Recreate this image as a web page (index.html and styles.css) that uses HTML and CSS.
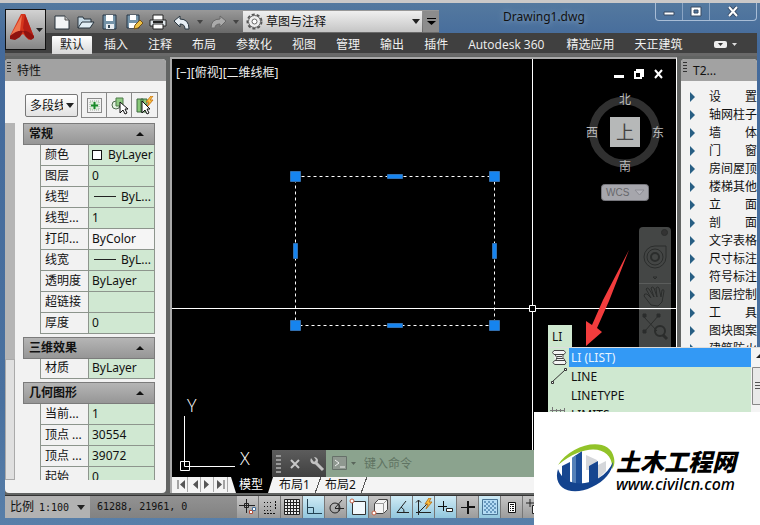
FILE: index.html
```html
<!DOCTYPE html>
<html lang="zh-CN">
<head>
<meta charset="utf-8">
<title>Drawing1.dwg</title>
<link rel="stylesheet" href="styles.css">
</head>
<body>
<div class="window">
  <header class="header">
    <button class="app-button" aria-label="应用程序菜单">
      <svg width="38" height="38" viewBox="0 0 38 38">
        <path d="M15 3h4l9 23-5 3-6-6-7 5-6-3z" fill="#d5351c"/>
        <path d="M16 4l-2 16-10 6z" fill="#ef7650"/>
        <path d="M19 3l9 23-6 2-5-11z" fill="#b51e15"/>
        <path d="M4 25q7-6 13-5l-3 6-5 3-5-1zM28 25q-7-6-11-5l3 6 5 3 3-2z" fill="#8f130f"/>
        <path d="M30 17h7l-3.500 4z" fill="#222"/>
      </svg>
    </button>
    <div class="title-row">
      <div class="quick-bar">
        <button class="tool" aria-label="新建"><svg width="18" height="16" viewBox="0 0 18 16"><path d="M2 2h10l4 4v9H2z" fill="#f2f5f7" stroke="#26333d"/><path d="M12 2v4h4" fill="#bbb" stroke="#555"/></svg></button>
        <button class="tool" aria-label="打开"><svg width="18" height="16" viewBox="0 0 18 16"><path d="M1 14V3h5l1 2h7v3" fill="#c8dbe7" stroke="#26333d"/><path d="M1 14l4-6h12l-4 6z" fill="#e1edf4" stroke="#26333d"/></svg></button>
        <button class="tool" aria-label="保存"><svg width="18" height="16" viewBox="0 0 18 16"><path d="M2 1h13v14H2z" fill="#7493a8" stroke="#263746"/><path d="M5 1h7v6H5z" fill="#fff"/><path d="M5 10h8v5H5z" fill="#e8edf1"/><path d="M7 11h2v3H7z" fill="#33495a"/></svg></button>
        <button class="tool" aria-label="另存为"><svg width="18" height="16" viewBox="0 0 18 16"><path d="M2 1h12v13H2z" fill="#7493a8" stroke="#263746"/><path d="M5 1h6v5H5zM4 9h8v5H4z" fill="#fff"/><path d="M9 15l1-4 5-5 3 3-5 5z" fill="#eec246" stroke="#765118"/></svg></button>
        <button class="tool" aria-label="打印"><svg width="18" height="16" viewBox="0 0 18 16"><path d="M4 1h10v6H4z" fill="#fff" stroke="#222"/><path d="M1 6h16v6H1z" fill="#dfe5e9" stroke="#222"/><path d="M4 10h10v5H4z" fill="#fff" stroke="#222"/><path d="M4 8h10" stroke="#222" stroke-width="2"/></svg></button>
        <button class="tool" aria-label="放弃"><svg width="18" height="16" viewBox="0 0 18 16"><path d="M1 7l6-5v3q9 0 9 10h-4q0-5-5-5v3z" fill="#e8eff5" stroke="#293640"/></svg></button>
        <span class="caret dim"></span>
        <button class="tool" aria-label="重做"><svg width="18" height="16" viewBox="0 0 18 16"><path d="M17 7l-6-5v3q-9 0-9 9h4q0-4 5-4v3z" fill="#aaa" stroke="#686868"/></svg></button>
        <span class="caret dim"></span>
        <label class="workspace">
          <svg width="17" height="17" viewBox="0 0 17 17"><circle cx="8.500" cy="8.500" r="7" fill="none" stroke="#555" stroke-width="2" stroke-dasharray="3 2"/><circle cx="8.500" cy="8.500" r="6" fill="#eee" stroke="#666"/><circle cx="8.500" cy="8.500" r="2.500" fill="#fff" stroke="#666"/></svg>
          <select aria-label="工作空间"><option>草图与注释</option></select>
          <span class="caret"></span>
        </label>
        <button class="more" aria-label="自定义"><svg width="9" height="9" viewBox="0 0 9 9"><path d="M0 1.500h9" stroke="#000"/><path d="M0 4h9L4.500 8z" fill="#000"/></svg></button>
      </div>
      <h1 class="title">Drawing1.dwg</h1>
      <div class="window-controls">
        <button aria-label="最小化"><svg width="14" height="13" viewBox="0 0 14 13"><path d="M2 7h10v3H2z" fill="#fff" stroke="#394b63"/></svg></button>
        <button aria-label="最大化"><svg width="14" height="13" viewBox="0 0 14 13"><path d="M2 2h10v9H2zM5 5h4v3H5z" fill="#fff" fill-rule="evenodd" stroke="#394b63"/></svg></button>
        <button class="close" aria-label="关闭"><svg width="14" height="13" viewBox="0 0 14 13"><path d="M3 2l8 9M11 2l-8 9" stroke="#394b63" stroke-width="4"/><path d="M3 2l8 9M11 2l-8 9" stroke="#fff" stroke-width="2"/></svg></button>
      </div>
    </div>
    <nav class="ribbon">
      <a class="active" href="#">默认</a><a href="#">插入</a><a href="#">注释</a><a href="#">布局</a><a href="#">参数化</a><a href="#">视图</a><a href="#">管理</a><a href="#">输出</a><a href="#">插件</a><a class="latin" href="#">Autodesk 360</a><a href="#">精选应用</a><a href="#">天正建筑</a>
      <button class="ribbon-toggle" aria-label="最小化功能区"><svg width="24" height="9" viewBox="0 0 24 9"><rect width="13" height="7" y="1" rx="2" fill="#eee"/><path d="M4 3h5L6.500 6z" fill="#333"/><path d="M18 3h5l-2.500 3z" fill="#ddd"/></svg></button>
    </nav>
  </header>

  <main class="workarea">
    <section class="palette properties">
      <h2 class="palette-title"><span class="grip"></span>特性</h2>
      <div class="properties-tools">
        <div class="object-pick"><select aria-label="对象类型"><option>多段线</option></select><span class="caret"></span></div>
        <div class="tool-group">
          <button aria-label="切换 PICKADD"><svg width="19" height="19" viewBox="0 0 19 19"><path d="M2.500 2.500h14v14h-14z" fill="none" stroke="#222" stroke-dasharray="1 1"/><path d="M5 5h9v9H5z" fill="#dcedda" stroke="#9aaa9a" stroke-dasharray="1 1"/><path d="M6 9.500h7M9.500 6v7" stroke="#168927" stroke-width="2"/></svg></button>
          <button aria-label="选择对象"><svg width="19" height="19" viewBox="0 0 19 19"><circle cx="6" cy="9" r="4" fill="#e4f2e2" stroke="#4d6a4d"/><path d="M6 2h7v8H6z" fill="#8fcb83" stroke="#4e7b4a"/><path d="M10 6v11l3-3 2 4 2-1-2-4h3z" fill="#fff" stroke="#111"/></svg></button>
          <button aria-label="快速选择"><svg width="19" height="19" viewBox="0 0 19 19"><path d="M2 3h6v13H2zM6 3h6v13H6z" fill="#89c979" stroke="#3f6940"/><path d="M16 0l-5 6h3l-2 5 6-7h-3l3-4z" fill="#ffc83d" stroke="#cc7c20"/><path d="M7 5v12l3-3 2 4 2-1-2-4h3z" fill="#fff" stroke="#111"/></svg></button>
        </div>
      </div>
      <div class="properties-body">
        <div class="scrollbar"><span></span></div>
        <div class="groups">
          <section>
            <h3>常规<span class="up"></span></h3>
            <table>
              <tr><th scope="row">颜色</th><td><span class="swatch"></span>ByLayer</td></tr>
              <tr><th scope="row">图层</th><td>0</td></tr>
              <tr><th scope="row">线型</th><td><span class="line-sample"></span>ByL...</td></tr>
              <tr><th scope="row">线型...</th><td>1</td></tr>
              <tr><th scope="row">打印...</th><td class="plain">ByColor</td></tr>
              <tr><th scope="row">线宽</th><td><span class="line-sample"></span>ByL...</td></tr>
              <tr><th scope="row">透明度</th><td>ByLayer</td></tr>
              <tr><th scope="row">超链接</th><td></td></tr>
              <tr><th scope="row">厚度</th><td>0</td></tr>
            </table>
          </section>
          <section>
            <h3>三维效果<span class="up"></span></h3>
            <table>
              <tr><th scope="row">材质</th><td>ByLayer</td></tr>
            </table>
          </section>
          <section>
            <h3>几何图形<span class="up"></span></h3>
            <table>
              <tr><th scope="row">当前...</th><td>1</td></tr>
              <tr><th scope="row">顶点 ...</th><td>30554</td></tr>
              <tr><th scope="row">顶点 ...</th><td>39072</td></tr>
              <tr><th scope="row">起始</th><td>0</td></tr>
            </table>
          </section>
        </div>
      </div>
    </section>

    <section class="drawing">
      <div class="canvas">
        <svg class="model" width="504" height="418" viewBox="172 59 504 418">
          <text class="view-label" x="176" y="77">[−][俯视][二维线框]</text>
          <g stroke="#fff" fill="none">
            <path d="M614 76.500h10" stroke-width="3"/>
            <path d="M635 72h6v6h-6zM637 72v-2h6v6h-2" stroke-width="2"/>
            <path d="M655 70l7 8M662 70l-7 8" stroke-width="2"/>
          </g>
          <circle cx="624.500" cy="132" r="31.500" fill="none" stroke="#303030" stroke-width="8"/>
          <rect x="610" y="117" width="30" height="30" fill="#b6b8b8"/>
          <g class="compass">
            <text x="625" y="104">北</text><text x="625" y="171">南</text>
            <text x="592" y="137">西</text><text x="658" y="137">东</text>
            <text class="top" x="625" y="139">上</text>
          </g>
          <rect x="601.500" y="184.500" width="47" height="16" rx="3" fill="#a6a6ac" stroke="#77777d"/>
          <text class="wcs" x="606" y="196">WCS</text>
          <path d="M635 190h9l-4.500 5z" fill="#b4b4bb" stroke="#8c8c93"/>
          <path d="M639 347V231q0-4 4-4h24q4 0 4 4v116z" fill="#444645"/>
          <g fill="none" stroke="#2b2d2c">
            <path d="M639 283.500h32M639 309.500h32" stroke="#5b5d5c"/>
            <circle cx="664.500" cy="232.500" r="3" fill="#333"/>
            <path d="M655 246h11v11a11 11 0 1 1-11-11z"/><circle cx="655" cy="257" r="8"/><circle cx="655" cy="257" r="4" stroke-width="2"/><path d="M653 277h4l-2 2z"/>
            <path d="M651 305l-7-9q0-3 3-2l4 4-5-9q1-2 3 0l5 8-3-9q1-2 3 0l3 9-1-9q2-2 3 0l2 9 1-7q2-1 2 1l-2 11-4 4z"/>
            <path d="M644 317l13 14M659 315l-14 16" /><path d="M643 314h3v3h-3zM657 314h3v3h-3zM643 330h3v3h-3z" fill="#2b2d2c"/><circle cx="660" cy="331" r="5" stroke-width="2"/><path d="M663 335l4 4" stroke-width="3"/>
          </g>
          <path d="M295.500 176.500h199v149h-199z" fill="none" stroke="#fff" stroke-dasharray="3 3"/>
          <g fill="#1684ef" stroke="#326fae">
            <path d="M290.500 171.500h10v10h-10zM489.500 171.500h10v10h-10zM290.500 320.500h10v10h-10zM489.500 320.500h10v10h-10z"/>
            <path d="M387.500 174.500h15v4h-15zM387.500 323.500h15v4h-15zM293.500 243.500h4v15h-4zM492.500 243.500h4v15h-4z"/>
          </g>
          <path d="M172 308.500h357M536 308.500h140M532.500 59v246M532.500 312v165M529.500 305.500h6v6h-6z" fill="none" stroke="#fff"/>
          <path d="M586 346V321l6 4 11-25 26-50-20 51-12 27 5 4z" fill="#f23c3d"/>
          <path d="M184.500 416v50.500H235M180.500 461.500h9v9h-9z" fill="none" stroke="#fff"/>
          <text class="axis" x="187" y="412">Y</text>
          <text class="axis" x="240" y="465">X</text>
        </svg>
        <div class="command-line">
          <span class="command-grip"></span>
          <button aria-label="关闭"><svg width="12" height="12" viewBox="0 0 12 12"><path d="M2 2l8 8M10 2l-8 8" stroke="#c7c7c7" stroke-width="2"/></svg></button>
          <button aria-label="自定义"><svg width="16" height="16" viewBox="0 0 16 16"><path d="M7 7l7 7" stroke="#c2c2c2" stroke-width="3"/><path d="M2 2q-2 4 2 6 5 1 5-4-1-3-4-3l2 3-2 2z" fill="#c2c2c2"/></svg></button>
          <label class="prompt">
            <svg width="26" height="15" viewBox="0 0 26 15"><path d="M.500.500h14v13H.500z" fill="#8f9890" stroke="#667069"/><path d="M3 4l4 3-4 3M8 11h5" fill="none" stroke="#f0f0f0"/><path d="M19 6h5l-2.500 3z" fill="#59665b"/></svg>
            <input type="text" placeholder="键入命令" aria-label="命令">
          </label>
        </div>
      </div>
      <nav class="layout-tabs">
        <svg width="54" height="15" viewBox="0 0 54 15"><path d="M13.500 0v15M26.500 0v15M39.500 0v15M53.500 0v15" stroke="#aaa"/><path d="M4 3v9M50 3v9" stroke="#555"/><path d="M11 3v9L6 7.500zM24 3v9l-5-4.500zM30 3v9l5-4.500zM43 3v9l5-4.500z" fill="#555"/></svg>
        <a class="active" href="#">模型</a><a href="#">布局1</a><a href="#">布局2</a>
      </nav>
    </section>

    <aside class="palette tangent">
      <h2 class="palette-title"><span class="grip"></span>T2...</h2>
      <ul>
        <li>设　　置</li><li>轴网柱子</li><li>墙　　体</li><li>门　　窗</li><li>房间屋顶</li><li>楼梯其他</li><li>立　　面</li><li>剖　　面</li><li>文字表格</li><li>尺寸标注</li><li>符号标注</li><li>图层控制</li><li>工　　具</li><li>图块图案</li><li>建筑防火</li>
      </ul>
    </aside>

    <div class="suggest">
      <input class="typed" type="text" value="LI" aria-label="动态输入">
      <div class="suggest-box">
        <ul>
          <li class="selected"><svg width="20" height="19" viewBox="0 0 20 19"><path d="M6 5.500h9l2 8.500H7z" fill="#f4f4f4"/><path d="M6 2.500h10q3 2 0 4H6q-3-2 0-4zM7 6.500q3 3 1 6M15 6.500q-1 3 2 6M7 12.500h10q2 2 0 4H7q-4-2 0-4zM9 8.500h5M9 10.500h6" fill="#f4f4f4" stroke="#444"/></svg>LI (LIST)</li>
          <li><svg width="20" height="19" viewBox="0 0 20 19"><path d="M4 15L17 3" stroke="#333"/><path d="M3.500 14.500h2v2h-2zM16.500 1.500h2v2h-2z" fill="#fff" stroke="#333"/></svg>LINE</li>
          <li><svg width="20" height="19" viewBox="0 0 20 19"></svg>LINETYPE</li>
          <li><svg width="20" height="19" viewBox="0 0 20 19"><path d="M4.500 2v14M8.500 4v12M12.500 4v12M2 5.500h14M2 9.500h14M16.500 3v13" stroke="#777"/></svg>LIMITS</li>
        </ul>
        <div class="suggest-scroll"><svg width="9" height="80" viewBox="0 0 9 80"><path d="M5 10l5-5v5z" fill="#222"/><path d="M1.500 19.500h12v37h-12z" fill="#e9e9e9" stroke="#888"/><path d="M4 34.500h6M4 37.500h6M4 40.500h6" stroke="#555"/></svg></div>
      </div>
    </div>
  </main>

  <footer class="status">
    <label class="scale">比例<select aria-label="比例"><option>1:100</option></select><span class="caret"></span></label>
    <output>61288, 21961, 0</output>
    <div class="toggles">
      <button aria-label="推断约束"><svg viewBox="0 0 18 18"><path d="M0 7.500h16M7.500 1v14M5.500 5.500h4v4h-4z" fill="none" stroke="#222"/><path d="M10.500 12.500h3v3h-3z" fill="#fff" stroke="#b54d38"/><path d="M13.500 9.500h3v3h-3z" fill="#fff" stroke="#426e9c"/></svg></button>
      <button aria-label="捕捉模式"><svg viewBox="0 0 18 18"><path d="M3 4.500h9M3 8.500h9M3 12.500h9" stroke="#111" stroke-dasharray="1 2"/><path d="M14.500 3v9M3 15.500h12" stroke="#111" stroke-dasharray="2 1"/></svg></button>
      <button aria-label="栅格显示"><svg viewBox="0 0 18 18"><path d="M1.500 1.500h15v15h-15z" fill="#eee"/><path d="M1.500 1.500h15v15h-15zM4.500 1v16M7.500 1v16M10.500 1v16M13.500 1v16M1 4.500h16M1 7.500h16M1 10.500h16M1 13.500h16" fill="none" stroke="#222"/></svg></button>
      <button class="on" aria-label="正交模式"><svg viewBox="0 0 18 18"><path d="M2.500 1v14.500H17M2.500 9.500h6v6" fill="none" stroke="#234354"/></svg></button>
      <button aria-label="极轴追踪"><svg viewBox="0 0 18 18"><circle cx="8" cy="10" r="5" fill="none" stroke="#222"/><path d="M8 10.500h9M8 10l7-8M12 6v7" stroke="#222"/></svg></button>
      <button class="on" aria-label="对象捕捉"><svg viewBox="0 0 18 18"><path d="M3.500 3.500h13v13h-13z" fill="#f1f8fc" stroke="#333"/><circle cx="3" cy="3" r="2" fill="#fff" stroke="#c65f44"/></svg></button>
      <button aria-label="三维对象捕捉"><svg viewBox="0 0 18 18"><path d="M3.500 5.500l4-4h9v10l-4 4h-9z" fill="#f5f5f5" stroke="#444"/><path d="M4 5.500h8.500v10M12.500 5.500l4-4" fill="none" stroke="#999"/><circle cx="3" cy="15" r="2" fill="#fff" stroke="#c65f44"/></svg></button>
      <button class="on" aria-label="对象捕捉追踪"><svg viewBox="0 0 18 18"><path d="M13 3L4 14.500h12M8 9q4 2 3 6" fill="none" stroke="#222"/></svg></button>
      <button class="on" aria-label="动态 UCS"><svg viewBox="0 0 18 18"><path d="M3.500 17V2M1 4.500L3.500 2 6 4.500M1 14.500h15M3 15l10-10" fill="none" stroke="#222"/><path d="M14 0l-4 6h3l-2 5 6-7h-3l2-4z" fill="#ffbf3b" stroke="#b97924"/></svg></button>
      <button class="on" aria-label="动态输入"><svg viewBox="0 0 18 18"><path d="M1 8.500h9M6.500 3v10" stroke="#111"/><path d="M9.500 10.500h6v3h-6z" fill="#fff" stroke="#222"/></svg></button>
      <button aria-label="线宽"><svg viewBox="0 0 18 18"><path d="M2 9.500h6" stroke="#111"/><path d="M9 3v13M9 9h7" stroke="#111" stroke-width="2"/></svg></button>
      <button class="on" aria-label="透明度"><svg viewBox="0 0 18 18"><path d="M1.500 1.500h15v15h-15z" fill="#b4dcf5" stroke="#4b7596"/><path d="M3 4h12M3 8h12M3 12h12" stroke="#6899bf" stroke-width="2" stroke-dasharray="2 2"/><path d="M5 6h10M5 10h10M5 14h10" stroke="#6899bf" stroke-width="2" stroke-dasharray="2 2"/></svg></button>
      <button aria-label="快捷特性"><svg viewBox="0 0 18 18"><path d="M5.500 4.500h7v10h-7z" fill="#fff" stroke="#111"/><path d="M7 6.500h4M7 8.500h1M9 8.500h2M7 10.500h1M9 10.500h2M7 12.500h1M9 12.500h2" stroke="#111"/></svg></button>
      <button aria-label="选择循环"><svg viewBox="0 0 18 18"><path d="M1 5h8M5 1v8" stroke="#222"/><path d="M7.500 7.500h9v8h-9z" fill="#fff" stroke="#222"/></svg></button>
    </div>
  </footer>

  <aside class="brand">
    <svg width="62" height="52" viewBox="0 0 62 52">
      <path d="M32 12l11 5v10H32zM44 22l8-4v10l-8 8z" fill="#d5d7da"/>
      <path d="M18 15l10-7v33H18z" fill="#1c4d97"/><path d="M8 23l8-4v21H8zM35 23l9-5v19l-9 4z" fill="#17468f"/>
      <path d="M18 15l4-3v29h-4z" fill="#5480b8"/>
      <path d="M4 22C17 0 56-8 60 15c1 5 0 8-2 11C60 5 34-3 4 22z" fill="#92c329"/>
      <path d="M4 26c-6 20 14 28 34 18 12-5 21-16 21-25C49 43 12 49 4 26z" fill="#13438e"/>
    </svg>
    <div class="brand-text"><strong>土木工程网</strong><span>www.civilcn.com</span></div>
  </aside>
</div>
</body>
</html>
```
FILE: styles.css
```css
* { box-sizing: border-box; }

body {
  margin: 0;
  font: 12px/18px "Noto Sans", "Noto Sans CJK SC", sans-serif;
  color: #111;
  overflow: hidden;
}

button, input, select {
  font: inherit;
  color: inherit;
  margin: 0;
  padding: 0;
  border: 0;
  border-radius: 0;
  background: none;
  appearance: none;
}

a { color: inherit; text-decoration: none; }
ul { list-style: none; margin: 0; padding: 0; }
h1, h2, h3 { margin: 0; font-size: 12px; font-weight: 400; }
svg { display: block; flex: none; }

.window {
  position: relative;
  display: flex;
  flex-direction: column;
  height: 100vh;
  padding: 0 3px 7px 5px;
  border-top: 3px solid #cbc9c8;
  background: linear-gradient(#54799f, #446a9b 40px, #4a719f 400px, #587fa9);
}

.caret {
  flex: none;
  border: 4px solid transparent;
  border-top: 5px solid #222;
  border-bottom: 0;
}
.caret.dim { border-width: 4px 3px 0; border-top-color: #444; }

/* Header */
.header {
  display: grid;
  grid-template-columns: 41px 1fr;
  grid-template-rows: 30px 20px 3px;
  background: linear-gradient(transparent 30px, #404040 30px, #404040 50px, #696969 50px);
}
.app-button {
  grid-row: 1 / 3;
  height: 41px;
  margin-top: 6px;
  border: 1px solid #111;
  background: linear-gradient(#d2d2d2, #858585);
}
.title-row { display: flex; align-items: flex-start; }
.quick-bar {
  display: flex;
  align-items: center;
  gap: 6px;
  height: 23px;
  margin-top: 7px;
  padding-left: 7px;
  background: linear-gradient(#999, #686868);
}
.workspace {
  display: flex;
  align-items: center;
  gap: 3px;
  width: 179px;
  height: 21px;
  margin-left: -2px;
  padding: 0 2px 0 3px;
  background: linear-gradient(#f0f0f0, #c5c5c5);
}
.workspace select { flex: 1; }
.more {
  display: grid;
  place-items: center;
  width: 16px;
  height: 21px;
  margin-left: -5px;
  background: #8c8c8c;
}
.title {
  flex: 1;
  padding: 5px 0 0 64px;
  text-shadow: 0 0 6px #9ab5d0;
}
.window-controls {
  display: flex;
  height: 18px;
  border: 1px solid #a8bdd6;
  border-top: 0;
  border-radius: 0 0 4px 4px;
}
.window-controls button {
  display: grid;
  place-items: center;
  width: 27px;
  border-right: 1px solid #8ba5c4;
}
.window-controls .close { width: 46px; border-right: 0; }
.ribbon {
  display: flex;
  align-items: center;
  gap: 20px;
  padding: 3px 0 0 14px;
  color: #f1f1f1;
  white-space: nowrap;
}
.ribbon .active {
  margin: 0 -8px;
  padding: 0 8px;
  border-radius: 1px 1px 0 0;
  background: linear-gradient(#fff, #d7d7d7);
  color: #222;
}
.ribbon .latin { font-family: "Open Sans", sans-serif; padding-right: 2px; }
.ribbon-toggle { margin-left: 12px; }

/* Work area */
.workarea {
  position: relative;
  display: flex;
  flex: 1;
  min-height: 0;
  padding: 3px 0 2px;
  background: #626463;
}
.palette {
  display: flex;
  flex-direction: column;
  overflow: hidden;
  border-radius: 4px;
  background: #f2f2f2;
}
.palette-title {
  display: flex;
  gap: 6px;
  height: 22px;
  flex: none;
  padding: 3px 3px 0 2px;
  background: #a2a2a2;
}
.grip {
  width: 4px;
  height: 11px;
  background: repeating-linear-gradient(#333 0 1px, transparent 1px 3px);
}
.properties { width: 161px; }
.properties-tools {
  display: flex;
  gap: 3px;
  padding: 11px 9px 5px 20px;
}
.object-pick {
  display: flex;
  align-items: center;
  width: 53px;
  height: 23px;
  margin-top: 2px;
  padding: 0 3px 0 4px;
  border: 1px solid #777;
  border-radius: 2px;
  background: linear-gradient(#fff, #e2e2e2);
}
.object-pick select { width: 33px; margin-right: 3px; overflow: hidden; text-overflow: clip; }
.tool-group { display: flex; border: 1px solid #888; }
.tool-group button {
  display: grid;
  place-items: center;
  width: 25px;
  height: 24px;
  border-right: 1px solid #888;
}
.tool-group button:last-child { border-right: 0; }
.properties-body {
  display: flex;
  flex: 1;
  min-height: 0;
  margin-bottom: 13px;
  gap: 8px;
}
.scrollbar { display: flex; width: 10px; align-items: flex-end; background: #b5b5b5; }
.scrollbar span { width: 100%; height: 34%; background: #e0e0e0; border: 1px solid #aaa; }
.groups { display: flex; flex-direction: column; gap: 3px; width: 132px; overflow: hidden; }
.groups h3 {
  display: flex;
  align-items: center;
  justify-content: space-between;
  height: 22px;
  padding: 0 10px 0 5px;
  border: 1px solid #7b7b7b;
  background: linear-gradient(#b5b5b5, #969696);
  font-weight: 700;
}
.up { border: 4px solid transparent; border-bottom: 4px solid #111; border-top: 0; }
table {
  width: 115px;
  margin-left: 17px;
  border-collapse: collapse;
  table-layout: fixed;
}
th, td {
  height: 21px;
  padding: 0 0 0 3px;
  border: 1px solid #8d958d;
  font-weight: 400;
  line-height: 18px;
  text-align: left;
  white-space: nowrap;
  overflow: hidden;
}
table tr:first-child > * { height: 20px; border-top: 0; }
th { width: 48px; padding-left: 4px; }
td { background: #d0e8d2; }
td.plain { background: #f5f5f5; }
.swatch {
  display: inline-block;
  width: 10px;
  height: 10px;
  margin-right: 6px;
  border: 1px solid #111;
  background: #fff;
  vertical-align: -1px;
}
.line-sample {
  display: inline-block;
  width: 22px;
  height: 1px;
  margin: 0 5px 0 2px;
  background: #222;
  vertical-align: 4px;
}

/* Drawing */
.drawing {
  display: flex;
  flex: 1;
  flex-direction: column;
  min-width: 0;
  margin: -2px 4px 0;
  border: 2px solid #aaa;
  border-right: 1px solid #fff;
  border-bottom: 0;
  background: #f4f4f4;
}
.canvas { position: relative; flex: 1; min-height: 0; overflow: hidden; background: #000; }
.view-label { fill: #eee; }
.compass { fill: #bbb; text-anchor: middle; }
.compass .top { fill: #444; font-size: 18px; }
.wcs { fill: #66666b; font: 10px "Liberation Sans", sans-serif; }
.axis { fill: #fff; font: 300 18px "Open Sans", sans-serif; }
.command-line {
  position: absolute;
  left: 100px;
  right: 0;
  bottom: 0;
  display: flex;
  align-items: center;
  gap: 8px;
  height: 27px;
  padding-left: 4px;
  background: linear-gradient(#5c5c5c, #404040);
}
.command-grip {
  width: 5px;
  height: 18px;
  background: repeating-linear-gradient(#999 0 2px, transparent 2px 4px);
}
.prompt {
  display: flex;
  flex: 1;
  align-items: center;
  gap: 6px;
  height: 27px;
  padding-left: 6px;
  margin-left: -7px;
  background: #8ba38e;
}
.prompt input { width: 120px; }
.prompt input::placeholder { color: #5f7362; opacity: 1; }
.layout-tabs { display: flex; height: 16px; padding-left: 2px; line-height: 16px; }
.layout-tabs svg { margin-right: 3px; }
.layout-tabs a {
  padding: 0 12px 0 10px;
  margin-right: -7px;
  background: linear-gradient(110deg, transparent calc(100% - 7px), #555 calc(100% - 7px), #555 calc(100% - 6px), transparent 0);
}
.layout-tabs .active {
  padding: 0 10px 0 8px;
  margin-right: -4px;
  background: #000;
  color: #fff;
  clip-path: polygon(0 0, 100% 0, calc(100% - 5px) 100%, 5px 100%);
}

.tangent { width: 76px; }
.tangent ul { padding-top: 7px; }
.tangent li {
  display: flex;
  align-items: center;
  gap: 14px;
  height: 18px;
  padding-left: 9px;
  white-space: nowrap;
}
.tangent li::before {
  content: "";
  border: 5px solid transparent;
  border-left-color: #275e83;
  border-right: 0;
}

/* Dynamic input */
.suggest { position: absolute; top: 269px; left: 543px; right: -3px; }
.typed {
  display: block;
  width: 24px;
  height: 22px;
  padding-left: 4px;
  background: #cfe8d0;
}
.suggest-box { display: flex; border-top: 1px solid #ddd; background: #cfe8d0; }
.suggest-box ul { flex: 1; }
.suggest-box li { display: flex; gap: 3px; height: 19px; line-height: 19px; }
.suggest-box .selected {
  background: linear-gradient(90deg, #cfe8d0 21px, #3399f5 21px);
  color: #e8f4ff;
}
.suggest-scroll { width: 9px; background: #f4f4f4; overflow: hidden; }

/* Status bar */
.status {
  display: flex;
  align-items: center;
  height: 23px;
  border-top: 1px solid #333;
  background: #a1a1a1;
}
.scale {
  display: flex;
  align-items: center;
  gap: 5px;
  width: 85px;
  height: 22px;
  padding: 0 5px;
  background: #b2b2b2;
}
.scale select { flex: 1; }
.scale select, .status output { font: 10px "DejaVu Sans Mono", monospace; }
.status output {
  width: 147px;
  height: 22px;
  padding-left: 7px;
  background: linear-gradient(#929292, #828282);
  line-height: 22px;
}
.toggles { display: flex; }
.toggles button {
  display: grid;
  place-items: center;
  width: 22px;
  height: 22px;
  border-right: 1px solid #777;
  background: linear-gradient(#c5c5c5, #9b9b9b);
}
.toggles svg { width: 18px; height: 18px; }
.toggles .on { background: linear-gradient(#d0ebf5, #91c6dd); }

/* Site mark */
.brand {
  position: absolute;
  right: 0;
  bottom: 0;
  display: flex;
  align-items: center;
  width: 226px;
  height: 113px;
  padding-left: 20px;
  background: #fff;
  color: #000;
}
.brand-text { display: flex; flex-direction: column; padding-top: 4px; white-space: nowrap; }
.brand strong { font: italic 900 24px/26px "Noto Sans CJK SC", sans-serif; }
.brand span { font: italic 500 16px/20px "Noto Sans", sans-serif; }
```
